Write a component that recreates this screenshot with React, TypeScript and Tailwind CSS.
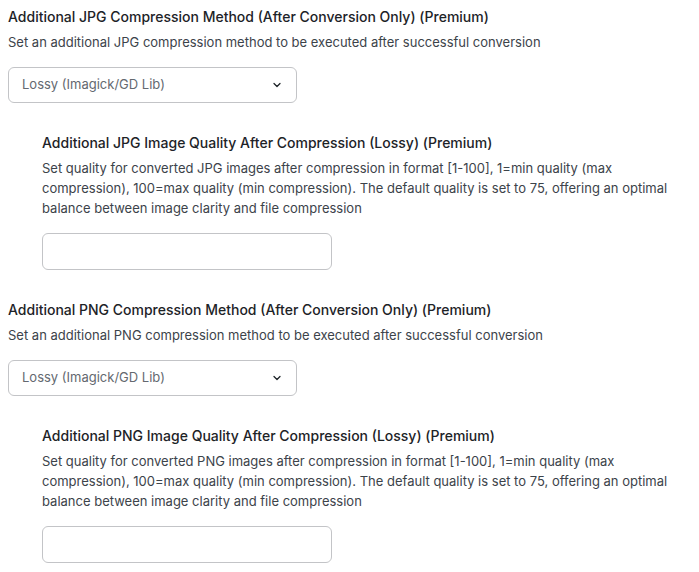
import { ChevronDown } from "lucide-react";

function SelectBox() {
  return (
    <div className="relative mt-[15px] w-[289px]">
      <div className="flex h-[36px] w-full items-center rounded-[6px] border border-[#c3c4c7] bg-white pl-[13px] pr-[13px] text-[13px] text-[#646970]">
        <span className="flex-1">Lossy (Imagick/GD Lib)</span>
        <ChevronDown className="h-[12px] w-[12px] text-[#1d2327]" strokeWidth={2.5} />
      </div>
    </div>
  );
}

function TextInput() {
  return (
    <input
      type="text"
      className="mt-[15px] block h-[37px] w-[290px] rounded-[6px] border border-[#c3c4c7] bg-white px-3 text-[13px] outline-none"
    />
  );
}

interface SectionProps {
  title: string;
  desc: string;
}

function MethodSection({ title, desc }: SectionProps) {
  return (
    <div>
      <h3 className="text-[14px] font-medium leading-[20px] text-[#1d2327]">{title}</h3>
      <p className="mt-[5px] text-[13px] leading-[20px] text-[#3c434a]">{desc}</p>
      <SelectBox />
    </div>
  );
}

function QualitySection({ title, desc }: SectionProps) {
  return (
    <div className="mt-[30px] pl-[34px]">
      <h3 className="text-[14px] font-medium leading-[20px] text-[#1d2327]">{title}</h3>
      <p className="mt-[5px] w-[645px] text-[13px] leading-[20px] text-[#3c434a]">{desc}</p>
      <TextInput />
    </div>
  );
}

const qualityDesc = (fmt: string) =>
  `Set quality for converted ${fmt} images after compression in format [1-100], 1=min quality (max compression), 100=max quality (min compression). The default quality is set to 75, offering an optimal balance between image clarity and file compression`;

export default function App() {
  return (
    <div
      className="min-h-screen bg-white pl-[8px] pt-[7px]"
      style={{ fontFamily: "Inter, 'Noto Sans', sans-serif" }}
    >
      <MethodSection
        title="Additional JPG Compression Method (After Conversion Only) (Premium)"
        desc="Set an additional JPG compression method to be executed after successful conversion"
      />
      <QualitySection
        title="Additional JPG Image Quality After Compression (Lossy) (Premium)"
        desc={qualityDesc("JPG")}
      />
      <div className="mt-[30px]">
        <MethodSection
          title="Additional PNG Compression Method (After Conversion Only) (Premium)"
          desc="Set an additional PNG compression method to be executed after successful conversion"
        />
      </div>
      <QualitySection
        title="Additional PNG Image Quality After Compression (Lossy) (Premium)"
        desc={qualityDesc("PNG")}
      />
    </div>
  );
}
